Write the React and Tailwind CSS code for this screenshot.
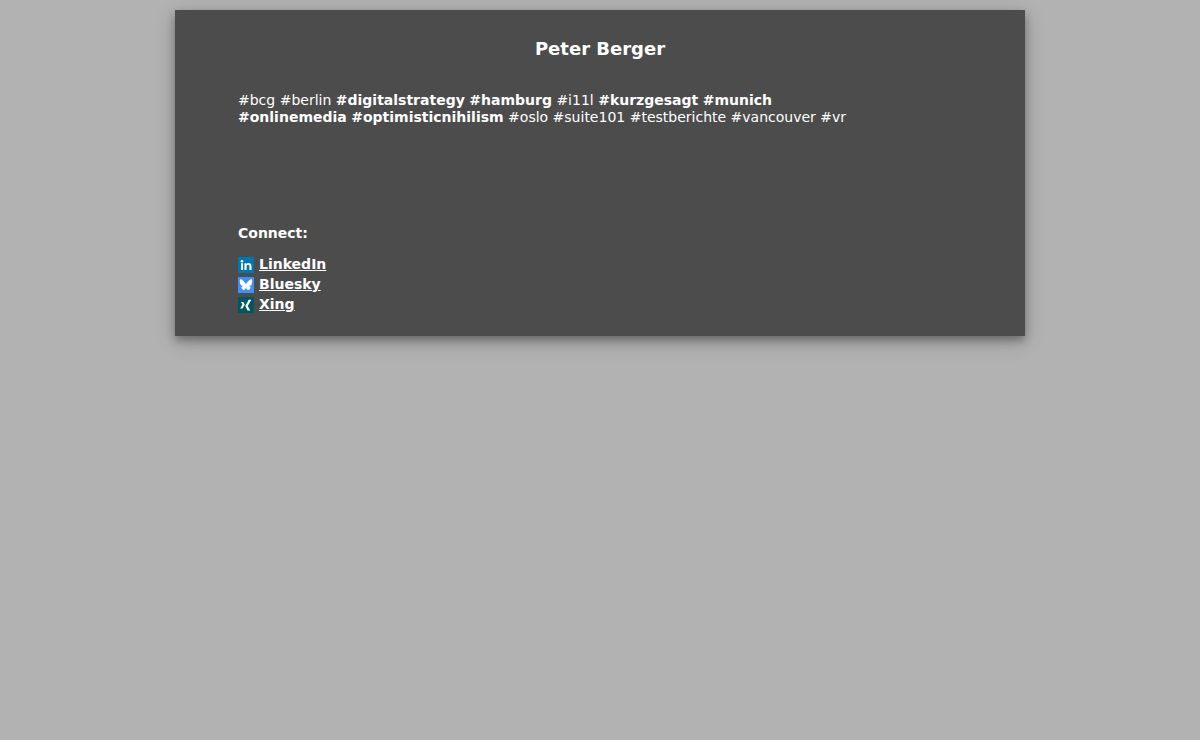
import React from 'react';

const tags = [
  { name: 'bcg' },
  { name: 'berlin' },
  { name: 'digitalstrategy', strong: true },
  { name: 'hamburg', strong: true },
  { name: 'i11l' },
  { name: 'kurzgesagt', strong: true },
  { name: 'munich', strong: true },
  { name: 'onlinemedia', strong: true },
  { name: 'optimisticnihilism', strong: true },
  { name: 'oslo' },
  { name: 'suite101' },
  { name: 'testberichte' },
  { name: 'vancouver' },
  { name: 'vr' },
];

const LinkedInIcon = () => (
  <svg viewBox="0 0 16 16" className="size-4" aria-hidden="true">
    <rect width="16" height="16" fill="#0077b5" />
    <circle cx="4" cy="4.2" r="1.3" fill="#fff" />
    <path d="M3 6.2h2V13H3zM6.400 6.200h2v.9c.4-.7 1.100-1.100 2.200-1.100 2.200 0 2.900 1.300 2.900 3.200V13h-2.100V9.600c0-.9-.1-1.800-1.300-1.800s-1.500.9-1.500 1.800V13H6.400z" fill="#fff" />
  </svg>
);

const BlueskyIcon = () => (
  <svg viewBox="0 0 16 16" className="size-4" aria-hidden="true">
    <rect width="16" height="16" fill="#3b91f8" />
    <path
      d="M8 7.300C7.300 5.900 5.400 3.500 3.600 2.600 2.400 2 1.800 2.300 1.800 3.600c0 .8.300 3.300.6 4 .4 1.200 1.700 1.500 2.900 1.400-1.900.4-2.600 1.500-1.200 3.100 1.900 1.900 3.200.6 3.900-1.500.7 2.100 2 3.400 3.900 1.500 1.400-1.600.7-2.700-1.200-3.100 1.200.1 2.500-.2 2.900-1.400.3-.7.6-3.200.6-4 0-1.300-.6-1.600-1.800-1C10.600 3.500 8.700 5.900 8 7.300Z"
      fill="#fff"
    />
  </svg>
);

const XingIcon = () => (
  <svg viewBox="0 0 16 16" className="size-4" aria-hidden="true">
    <rect width="16" height="16" fill="#015760" />
    <path d="M3 5h2.400l1.400 2.500-2.200 3.900H2.200l2.200-3.900zM10.700 2.700h2.600L9.800 8.900l2.400 4.700H9.600L7.200 8.900z" fill="#fff" />
  </svg>
);

const links = [
  { label: 'LinkedIn', href: 'https://www.linkedin.com', Icon: LinkedInIcon },
  { label: 'Bluesky', href: 'https://bsky.app', Icon: BlueskyIcon },
  { label: 'Xing', href: 'https://www.xing.com', Icon: XingIcon },
];

const App = () => {
  return (
    <div className="min-h-screen bg-[#b2b2b2] py-2.5 font-[Verdana,'DejaVu_Sans',sans-serif] text-sm text-white">
      <main className="mx-auto max-w-[850px] bg-[#4c4c4c] px-[63px] pt-7 pb-[21px] shadow-[0_4px_8px_rgba(0,0,0,0.3),0_6px_20px_rgba(0,0,0,0.2)]">
        <h1 className="text-center text-lg leading-[22px] font-bold">Peter Berger</h1>

        <p className="mt-8 max-w-[620px] leading-[17px]">
          {tags.map(({ name, strong }) => (
            <React.Fragment key={name}>
              {strong ? <b>#{name}</b> : <span>#{name}</span>}{' '}
            </React.Fragment>
          ))}
        </p>

        <h2 className="mt-[99px] leading-4 font-bold">Connect:</h2>
        <ul className="mt-3.5">
          {links.map(({ label, href, Icon }) => (
            <li key={label} className="h-5">
              <a href={href} className="inline-flex items-end gap-[5px] font-bold">
                <Icon />
                <span className="leading-[18px] underline">{label}</span>
              </a>
            </li>
          ))}
        </ul>
      </main>
    </div>
  );
};

export default App;
